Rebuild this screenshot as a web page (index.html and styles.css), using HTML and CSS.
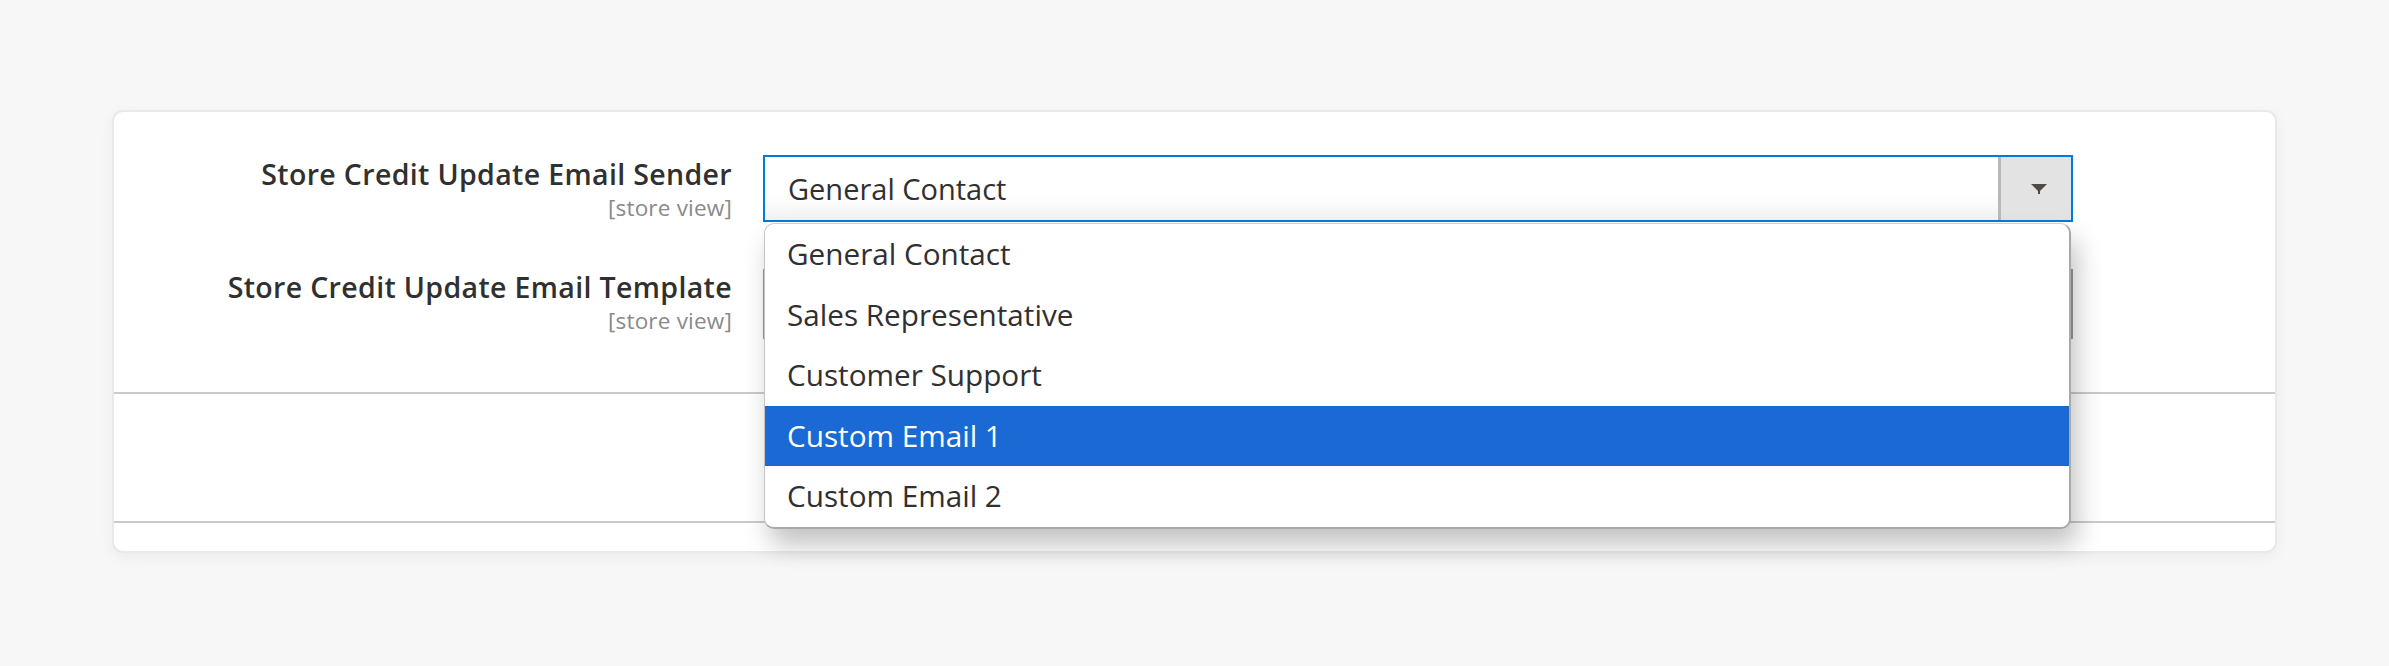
FILE: index.html
```html
<!DOCTYPE html>
<html lang="en">
<head>
<meta charset="utf-8">
<title>Store Credit Email Settings</title>
<link rel="stylesheet" href="styles.css">
</head>
<body>
<div class="card">
  <div class="form">
    <div class="field">
      <div class="label">
        <span class="label-text">Store Credit Update Email Sender</span>
        <span class="scope">[store view]</span>
      </div>
      <div class="control">
        <div class="select focused">
          <span class="select-value">General Contact</span>
          <span class="select-btn"><svg class="arrow" width="18" height="12" viewBox="0 0 18 12"><path d="M1 1 H17 L9 9 Z" fill="#514943"/><rect x="8" y="7" width="2" height="4" fill="#514943"/></svg></span>
        </div>
        <ul class="dropdown">
          <li class="option">General Contact</li>
          <li class="option">Sales Representative</li>
          <li class="option">Customer Support</li>
          <li class="option selected">Custom Email 1</li>
          <li class="option">Custom Email 2</li>
        </ul>
      </div>
    </div>
    <div class="field">
      <div class="label">
        <span class="label-text">Store Credit Update Email Template</span>
        <span class="scope">[store view]</span>
      </div>
      <div class="control">
        <div class="select plain"></div>
      </div>
    </div>
  </div>
  <div class="divider first"></div>
  <div class="spacer"></div>
  <div class="divider"></div>
  <div class="foot"></div>
</div>
</body>
</html>
```
FILE: styles.css
```css
html, body {
  margin: 0;
  padding: 0;
}
body {
  background: #f7f7f7;
  font-family: "Open Sans", "Noto Sans", "Liberation Sans", sans-serif;
  color: #303030;
  padding: 110px 0 0 112px;
  height: 666px;
  box-sizing: border-box;
}
.card {
  width: 2165px;
  height: 443px;
  box-sizing: border-box;
  background: #fff;
  border: 2px solid #e9e9e9;
  border-radius: 11px;
  box-shadow: 0 4px 14px rgba(0, 0, 0, 0.05);
  display: flex;
  flex-direction: column;
}
.form {
  padding-top: 43px;
  display: flex;
  flex-direction: column;
  gap: 46px;
}
.field {
  display: grid;
  grid-template-columns: 618px 1310px;
  column-gap: 31px;
  align-items: start;
}
.label {
  display: flex;
  flex-direction: column;
  align-items: flex-end;
  text-align: right;
  padding-top: 2px;
}
.label-text {
  font-size: 28.5px;
  font-weight: 600;
  line-height: 34px;
  color: #303030;
  letter-spacing: 0.35px;
}
.scope {
  font-size: 22.5px;
  line-height: 24px;
  margin-top: 5px;
  color: #8a8a8a;
  letter-spacing: 0.2px;
}
.control {
  position: relative;
}
.select {
  box-sizing: border-box;
  height: 67px;
  display: flex;
  align-items: center;
  background: linear-gradient(#ffffff 60%, #f2f2f2);
}
.select.focused {
  border: 2px solid #007bdb;
  padding-left: 23px;
}
.select.plain {
  height: 70px;
  border: 2px solid #9a9a9a;
  margin-top: 1px;
}
.select-value {
  flex: 1;
  font-size: 29px;
  line-height: 40px;
  color: #303030;
}
.select-btn {
  align-self: stretch;
  width: 70px;
  background: #e3e3e3;
  border-left: 3px solid #b9b9b9;
  display: flex;
  align-items: center;
  justify-content: center;
}
.arrow {
  display: block;
  margin-left: 6px;
}
.dropdown {
  position: absolute;
  left: 1px;
  top: 68px;
  width: 1307px;
  box-sizing: border-box;
  margin: 0;
  padding: 0;
  list-style: none;
  background: #fff;
  border: 1px solid #ababab;
  border-top-color: #cfcfcf;
  border-left-color: #c4c4c4;
  border-right: 2px solid #a9a9a9;
  border-bottom: 2px solid #a9a9a9;
  border-radius: 10px;
  overflow: hidden;
  box-shadow: 6px 16px 26px rgba(0, 0, 0, 0.24);
  z-index: 5;
}
.option {
  height: 60.5px;
  line-height: 60px;
  padding-left: 22px;
  font-size: 29.7px;
  color: #303030;
}
.option.selected {
  background: #1a69d4;
  color: #ffffff;
}
.divider {
  height: 2px;
  background: #cacaca;
}
.divider.first {
  margin-top: 53px;
}
.spacer {
  height: 127px;
}
.foot {
  flex: 1;
}
```
